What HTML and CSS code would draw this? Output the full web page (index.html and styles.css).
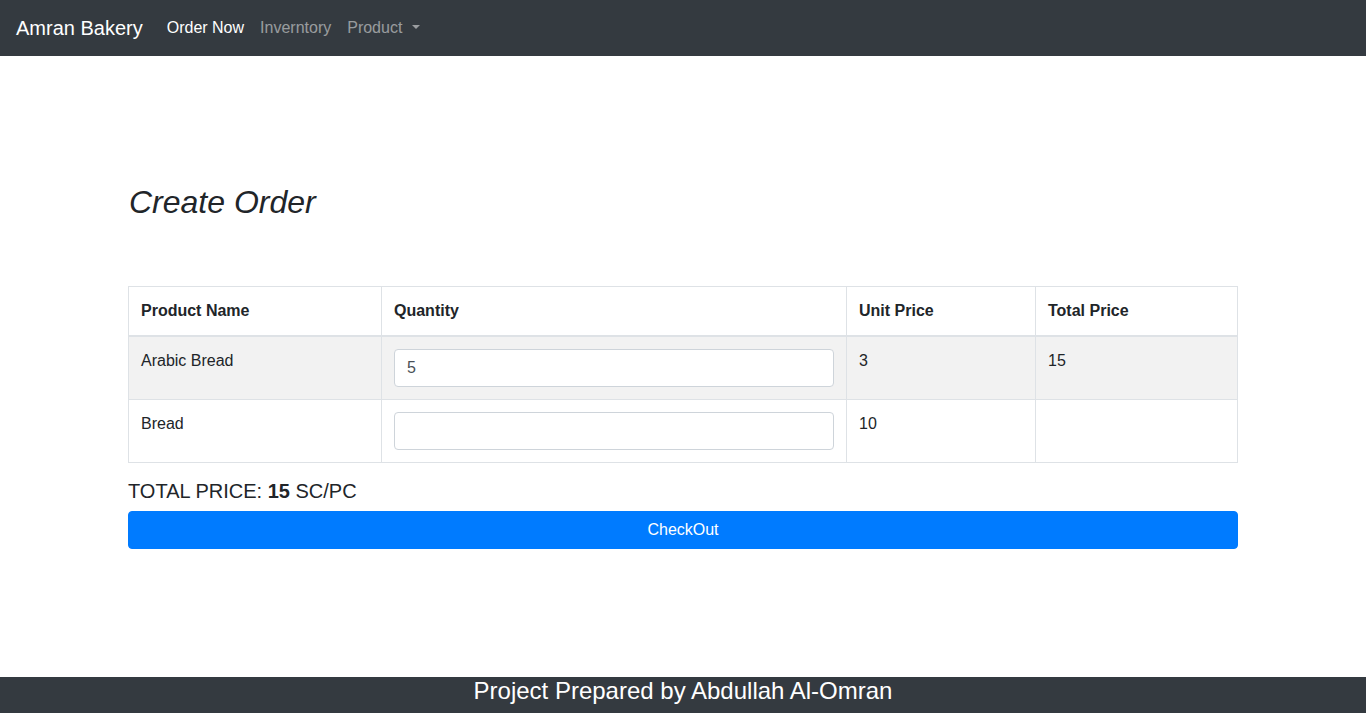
FILE: index.html
```html
<!DOCTYPE html>
<html lang="en">
<head>
<meta charset="utf-8">
<title>Amran Bakery</title>
<link rel="stylesheet" href="styles.css">
</head>
<body>
<nav class="navbar">
  <a class="brand" href="#">Amran Bakery</a>
  <ul class="nav">
    <li><a class="nav-link active" href="#">Order Now</a></li>
    <li><a class="nav-link" href="#">Inverntory</a></li>
    <li><a class="nav-link dropdown" href="#">Product</a></li>
  </ul>
</nav>

<main class="container">
  <h2 class="title">Create Order</h2>
  <table class="table">
    <thead>
      <tr>
        <th class="c1">Product Name</th>
        <th class="c2">Quantity</th>
        <th class="c3">Unit Price</th>
        <th class="c4">Total Price</th>
      </tr>
    </thead>
    <tbody>
      <tr class="striped">
        <td>Arabic Bread</td>
        <td><input class="form-control" type="text" value="5"></td>
        <td>3</td>
        <td>15</td>
      </tr>
      <tr>
        <td>Bread</td>
        <td><input class="form-control" type="text" value=""></td>
        <td>10</td>
        <td></td>
      </tr>
    </tbody>
  </table>
  <h5 class="total">TOTAL PRICE: <b>15</b> SC/PC</h5>
  <button class="btn">CheckOut</button>
</main>

<footer class="footer">Project Prepared by Abdullah Al-Omran</footer>
</body>
</html>
```

FILE: styles.css
```css
* { box-sizing: border-box; }
html, body { margin: 0; padding: 0; }
body {
  font-family: "Liberation Sans", Arial, sans-serif;
  font-size: 16px;
  line-height: 1.5;
  color: #212529;
  background: #fff;
}
.navbar {
  display: flex;
  align-items: center;
  height: 56px;
  padding: 8px 16px;
  background: #343a40;
}
.brand {
  font-size: 20px;
  line-height: 30px;
  padding: 5px 0;
  margin-right: 16px;
  color: #fff;
  text-decoration: none;
}
.nav {
  display: flex;
  list-style: none;
  margin: 0;
  padding: 0;
}
.nav-link {
  display: block;
  padding: 8px;
  color: rgba(255,255,255,.5);
  text-decoration: none;
}
.nav-link.active { color: #fff; }
.dropdown::after {
  content: "";
  display: inline-block;
  margin-left: 10px;
  vertical-align: .255em;
  border-top: .3em solid;
  border-right: .3em solid transparent;
  border-left: .3em solid transparent;
  border-bottom: 0;
}
.container {
  width: 1140px;
  margin: 0 auto;
  padding: 127px 15px 0;
}
.title {
  font-size: 32px;
  font-style: italic;
  font-weight: 500;
  line-height: 1.2;
  margin: 0 0 65px 1px;
}
.table {
  width: 100%;
  border-collapse: collapse;
  margin-bottom: 16px;
}
.table th, .table td {
  border: 1px solid #dee2e6;
  padding: 12px;
  text-align: left;
  vertical-align: top;
}
.table th { font-weight: bold; }
.table thead th { border-bottom: 2px solid #dee2e6; }
.c1 { width: 253px; }
.c2 { width: 465px; }
.c3 { width: 189px; }
.striped td { background: #f2f2f2; }
.form-control {
  display: block;
  width: 100%;
  height: 38px;
  padding: 6px 12px;
  font-family: inherit;
  font-size: 16px;
  line-height: 1.5;
  color: #495057;
  background: #fff;
  border: 1px solid #ced4da;
  border-radius: 4px;
}
.total {
  font-size: 20px;
  font-weight: 400;
  line-height: 1.2;
  margin: 0 0 8px;
}
.btn {
  display: block;
  width: 100%;
  height: 38px;
  padding: 6px 12px;
  font-family: inherit;
  font-size: 16px;
  line-height: 1.5;
  color: #fff;
  background: #007bff;
  border: 1px solid #007bff;
  border-radius: 4px;
  text-align: center;
}
.footer {
  position: fixed;
  left: 0;
  right: 0;
  bottom: 0;
  height: 36px;
  padding-bottom: 8px;
  background: #343a40;
  color: #fff;
  font-size: 24px;
  line-height: 28px;
  text-align: center;
}
```
